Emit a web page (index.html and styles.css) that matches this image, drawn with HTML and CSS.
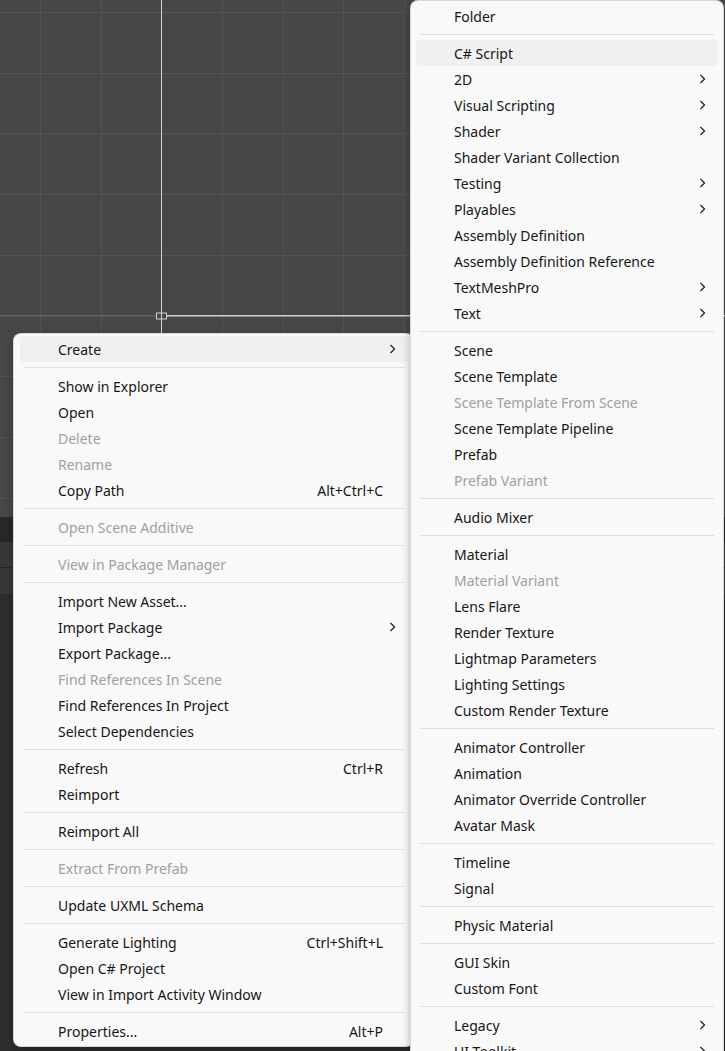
FILE: index.html
```html
<!DOCTYPE html>
<html lang="en">
<head>
<meta charset="utf-8">
<title>Create menu</title>
<link rel="stylesheet" href="styles.css">
</head>
<body>
<div class="editor">
  <div class="scene">
    <svg class="grid" width="725" height="516" viewBox="0 0 725 516">
      <g stroke="#535353" stroke-width="1">
        <line x1="40.5" y1="0" x2="40.5" y2="516"/>
        <line x1="101.5" y1="0" x2="101.5" y2="516"/>
        <line x1="222.5" y1="0" x2="222.5" y2="516"/>
        <line x1="283.5" y1="0" x2="283.5" y2="516"/>
        <line x1="343.5" y1="0" x2="343.5" y2="516"/>
        <line x1="404.5" y1="0" x2="404.5" y2="516"/>
        <line x1="465.5" y1="0" x2="465.5" y2="516"/>
        <line x1="525.5" y1="0" x2="525.5" y2="516"/>
        <line x1="586.5" y1="0" x2="586.5" y2="516"/>
        <line x1="647.5" y1="0" x2="647.5" y2="516"/>
        <line x1="707.5" y1="0" x2="707.5" y2="516"/>
        <line x1="0" y1="12.5" x2="725" y2="12.5"/>
        <line x1="0" y1="73.5" x2="725" y2="73.5"/>
        <line x1="0" y1="133.5" x2="725" y2="133.5"/>
        <line x1="0" y1="194.5" x2="725" y2="194.5"/>
        <line x1="0" y1="255.5" x2="725" y2="255.5"/>
        <line x1="0" y1="376.5" x2="725" y2="376.5"/>
        <line x1="0" y1="437.5" x2="725" y2="437.5"/>
        <line x1="0" y1="498.5" x2="725" y2="498.5"/>
      </g>
      <line x1="0" y1="315.8" x2="156" y2="315.8" stroke="#626262" stroke-width="1.5"/>
      <line x1="166" y1="315.8" x2="725" y2="315.8" stroke="#d2d2d2" stroke-width="1.5"/>
      <line x1="161.5" y1="0" x2="161.5" y2="516" stroke="#d2d2d2" stroke-width="1"/>
      <rect x="156.5" y="313" width="10" height="6" fill="none" stroke="#cfcfcf" stroke-width="1"/>
    </svg>
  </div>
  <div class="toolbar"></div>
  <div class="panel-head">
    <div class="panel-row"></div>
    <div class="panel-row"></div>
  </div>
  <div class="panel-body"></div>
</div>

<div class="menu menu-left">
  <div class="item active"><span class="label">Create</span><svg class="chev" width="7" height="10" viewBox="0 0 7 10"><path d="M1.5 1 L5.5 5 L1.5 9"/></svg></div>
  <div class="sep"></div>
  <div class="item"><span class="label">Show in Explorer</span></div>
  <div class="item"><span class="label">Open</span></div>
  <div class="item disabled"><span class="label">Delete</span></div>
  <div class="item disabled"><span class="label">Rename</span></div>
  <div class="item"><span class="label">Copy Path</span><span class="key">Alt+Ctrl+C</span></div>
  <div class="sep"></div>
  <div class="item disabled"><span class="label">Open Scene Additive</span></div>
  <div class="sep"></div>
  <div class="item disabled"><span class="label">View in Package Manager</span></div>
  <div class="sep"></div>
  <div class="item"><span class="label">Import New Asset...</span></div>
  <div class="item"><span class="label">Import Package</span><svg class="chev" width="7" height="10" viewBox="0 0 7 10"><path d="M1.5 1 L5.5 5 L1.5 9"/></svg></div>
  <div class="item"><span class="label">Export Package...</span></div>
  <div class="item disabled"><span class="label">Find References In Scene</span></div>
  <div class="item"><span class="label">Find References In Project</span></div>
  <div class="item"><span class="label">Select Dependencies</span></div>
  <div class="sep"></div>
  <div class="item"><span class="label">Refresh</span><span class="key">Ctrl+R</span></div>
  <div class="item"><span class="label">Reimport</span></div>
  <div class="sep"></div>
  <div class="item"><span class="label">Reimport All</span></div>
  <div class="sep"></div>
  <div class="item disabled"><span class="label">Extract From Prefab</span></div>
  <div class="sep"></div>
  <div class="item"><span class="label">Update UXML Schema</span></div>
  <div class="sep"></div>
  <div class="item"><span class="label">Generate Lighting</span><span class="key">Ctrl+Shift+L</span></div>
  <div class="item"><span class="label">Open C# Project</span></div>
  <div class="item"><span class="label">View in Import Activity Window</span></div>
  <div class="sep"></div>
  <div class="item"><span class="label">Properties...</span><span class="key">Alt+P</span></div>
</div>

<div class="menu menu-right">
  <div class="item"><span class="label">Folder</span></div>
  <div class="sep"></div>
  <div class="item active"><span class="label">C# Script</span></div>
  <div class="item"><span class="label">2D</span><svg class="chev" width="7" height="10" viewBox="0 0 7 10"><path d="M1.5 1 L5.5 5 L1.5 9"/></svg></div>
  <div class="item"><span class="label">Visual Scripting</span><svg class="chev" width="7" height="10" viewBox="0 0 7 10"><path d="M1.5 1 L5.5 5 L1.5 9"/></svg></div>
  <div class="item"><span class="label">Shader</span><svg class="chev" width="7" height="10" viewBox="0 0 7 10"><path d="M1.5 1 L5.5 5 L1.5 9"/></svg></div>
  <div class="item"><span class="label">Shader Variant Collection</span></div>
  <div class="item"><span class="label">Testing</span><svg class="chev" width="7" height="10" viewBox="0 0 7 10"><path d="M1.5 1 L5.5 5 L1.5 9"/></svg></div>
  <div class="item"><span class="label">Playables</span><svg class="chev" width="7" height="10" viewBox="0 0 7 10"><path d="M1.5 1 L5.5 5 L1.5 9"/></svg></div>
  <div class="item"><span class="label">Assembly Definition</span></div>
  <div class="item"><span class="label">Assembly Definition Reference</span></div>
  <div class="item"><span class="label">TextMeshPro</span><svg class="chev" width="7" height="10" viewBox="0 0 7 10"><path d="M1.5 1 L5.5 5 L1.5 9"/></svg></div>
  <div class="item"><span class="label">Text</span><svg class="chev" width="7" height="10" viewBox="0 0 7 10"><path d="M1.5 1 L5.5 5 L1.5 9"/></svg></div>
  <div class="sep"></div>
  <div class="item"><span class="label">Scene</span></div>
  <div class="item"><span class="label">Scene Template</span></div>
  <div class="item disabled"><span class="label">Scene Template From Scene</span></div>
  <div class="item"><span class="label">Scene Template Pipeline</span></div>
  <div class="item"><span class="label">Prefab</span></div>
  <div class="item disabled"><span class="label">Prefab Variant</span></div>
  <div class="sep"></div>
  <div class="item"><span class="label">Audio Mixer</span></div>
  <div class="sep"></div>
  <div class="item"><span class="label">Material</span></div>
  <div class="item disabled"><span class="label">Material Variant</span></div>
  <div class="item"><span class="label">Lens Flare</span></div>
  <div class="item"><span class="label">Render Texture</span></div>
  <div class="item"><span class="label">Lightmap Parameters</span></div>
  <div class="item"><span class="label">Lighting Settings</span></div>
  <div class="item"><span class="label">Custom Render Texture</span></div>
  <div class="sep"></div>
  <div class="item"><span class="label">Animator Controller</span></div>
  <div class="item"><span class="label">Animation</span></div>
  <div class="item"><span class="label">Animator Override Controller</span></div>
  <div class="item"><span class="label">Avatar Mask</span></div>
  <div class="sep"></div>
  <div class="item"><span class="label">Timeline</span></div>
  <div class="item"><span class="label">Signal</span></div>
  <div class="sep"></div>
  <div class="item"><span class="label">Physic Material</span></div>
  <div class="sep"></div>
  <div class="item"><span class="label">GUI Skin</span></div>
  <div class="item"><span class="label">Custom Font</span></div>
  <div class="sep"></div>
  <div class="item"><span class="label">Legacy</span><svg class="chev" width="7" height="10" viewBox="0 0 7 10"><path d="M1.5 1 L5.5 5 L1.5 9"/></svg></div>
  <div class="item"><span class="label">UI Toolkit</span><svg class="chev" width="7" height="10" viewBox="0 0 7 10"><path d="M1.5 1 L5.5 5 L1.5 9"/></svg></div>
</div>
</body>
</html>
```

FILE: styles.css
```css
html, body {
  margin: 0;
  padding: 0;
}

body {
  width: 725px;
  height: 1051px;
  position: relative;
  overflow: hidden;
  background: #2d2d2d;
  font-family: "Noto Sans", "Open Sans", "Liberation Sans", sans-serif;
  font-size: 14px;
}

.editor {
  display: flex;
  flex-direction: column;
  width: 725px;
  height: 1051px;
}

.scene {
  height: 517px;
  background: #474747;
  flex: none;
}

.grid {
  display: block;
}

.toolbar {
  height: 25px;
  background: #282828;
  flex: none;
}

.panel-head {
  flex: none;
  background: #383838;
  display: flex;
  flex-direction: column;
}

.panel-row {
  height: 25px;
  border-bottom: 1px solid #262626;
}

.panel-row + .panel-row {
  border-bottom: none;
  height: 26px;
}

.panel-body {
  flex: 1;
  background: #2d2d2d;
}

.menu {
  position: absolute;
  box-sizing: border-box;
  background: #f9f9f9;
  border: 1px solid rgba(0, 0, 0, 0.13);
  border-radius: 8px;
  padding: 2px 0 2px;
  box-shadow: 0 3px 10px rgba(0, 0, 0, 0.28);
  color: #161616;
}

.menu-left {
  left: 13px;
  top: 333px;
  width: 401px;
}

.menu-right {
  left: 410px;
  top: 0;
  width: 314px;
  padding-bottom: 40px;
}

.item {
  display: flex;
  align-items: center;
  height: 24px;
  margin: 0 5px 0 6px;
  padding: 2px 12px 0 38px;
  border-radius: 4px;
  line-height: 24px;
  white-space: nowrap;
}

.menu-right .item {
  margin: 0 5px;
}

.item.active {
  background: #f0f0f0;
}

.item.disabled {
  color: #a0a0a0;
}

.label {
  flex: 1;
}

.key {
  margin-right: 13px;
}

.chev {
  display: block;
  flex: none;
  margin-top: -3px;
  fill: none;
  stroke: #262626;
  stroke-width: 1.3;
}

.sep {
  height: 1px;
  margin: 5px 9px 5px 10px;
  background: #dedede;
}

.menu-right .sep {
  margin: 5px 9px;
}
```
